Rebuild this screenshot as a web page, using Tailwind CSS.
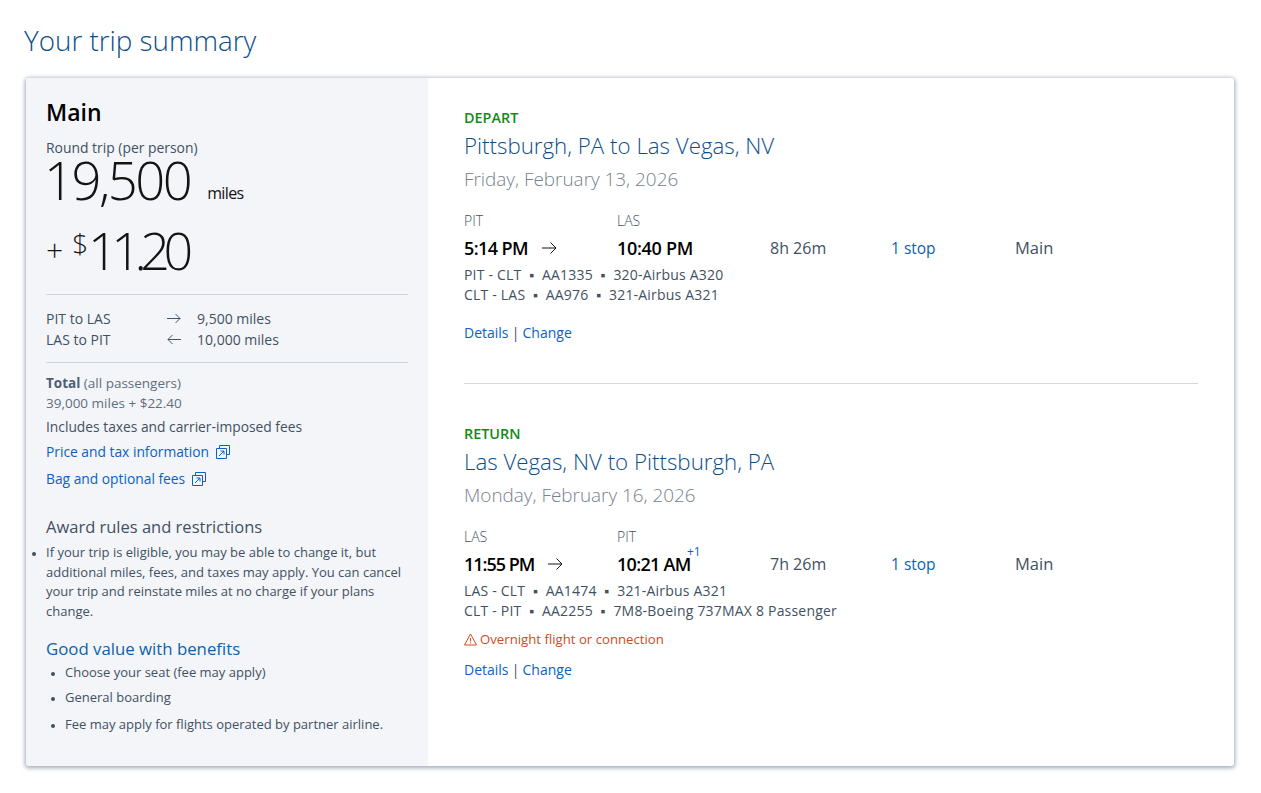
<!DOCTYPE html>
<html lang="en">
<head>
  <meta charset="UTF-8" />
  <title>Your trip summary</title>
  <script src="https://cdn.jsdelivr.net/npm/@tailwindcss/browser@4"></script>
</head>
<body class="bg-white font-['Open_Sans',sans-serif] text-[#3f5163]">
<div class="w-[1261px] h-[793px] overflow-hidden pl-[26px] pr-[27px]">
  <h1 class="h-[78px] pt-[20px] -ml-[2px] text-[27.8px] leading-[40px] font-light text-[#0b4f8a]">Your trip summary</h1>

  <div class="flex h-[688px] rounded-[3px] bg-white shadow-[0_1px_4px_1px_rgba(90,115,140,0.6)]">
    <!-- Fare panel -->
    <aside class="w-[402px] shrink-0 bg-[#f4f5f8] pl-[20px] pr-[20px] rounded-l-[3px]">
      <h2 class="pt-[18px] text-[23px] leading-[32px] font-semibold text-black">Main</h2>
      <p class="mt-[10px] text-[13.9px] leading-[20px]">Round trip (per person)</p>
      <div class="flex items-end h-[52px] -mt-[4px] -ml-[2px] text-[#131313]">
        <span class="text-[52.5px] leading-[52px] font-light tracking-[-2.5px]">19,500</span>
        <span class="ml-[17px] mb-[3px] text-[16px] leading-[20px] tracking-[-0.6px]">miles</span>
      </div>
      <div class="flex items-end h-[58px] mt-[14px] text-[#131313]">
        <span class="text-[30px] leading-[44px] font-light mb-[6px]">+</span>
        <span class="ml-[9px] mb-[19px] text-[28px] leading-[32px] font-light">$</span>
        <span class="text-[52px] leading-[56px] font-light tracking-[-6.5px]">11.20</span>
      </div>

      <div class="mt-[16px] border-t border-[#ccd6e0] pt-[13px] pb-[12px] text-[14px] leading-[21px]">
        <div class="flex"><span class="w-[120px]">PIT to LAS</span><svg class="w-[16px] h-[21px] mr-[15px]" viewBox="0 0 16 21" fill="none" stroke="#44566a" stroke-width="1"><path d="M1 10.5h13M9.500 6l4.500 4.500-4.500 4.500"/></svg><span>9,500 miles</span></div>
        <div class="flex"><span class="w-[120px]">LAS to PIT</span><svg class="w-[16px] h-[21px] mr-[15px]" viewBox="0 0 16 21" fill="none" stroke="#44566a" stroke-width="1"><path d="M15 10.5H2M6.500 6L2 10.5 6.500 15"/></svg><span>10,000 miles</span></div>
      </div>

      <div class="border-t border-[#ccd6e0] pt-[10px]">
        <p class="text-[13.5px] leading-[20px] text-[#5f6f80]"><b class="font-bold text-[#4d5f72]">Total</b> (all passengers)</p>
        <p class="text-[13.5px] leading-[20px] text-[#5f6f80]">39,000 miles + $22.40</p>
        <p class="mt-[4px] text-[13.8px] leading-[20px]">Includes taxes and carrier-imposed fees</p>
        <a class="mt-[5px] flex items-center gap-[7px] text-[13.8px] leading-[20px] text-[#0b62c4]">Price and tax information
          <svg class="w-[14px] h-[14px]" viewBox="0 0 14 14" fill="none" stroke="#0b62c4" stroke-width="1"><path d="M3.500 3.500v-3h10v9h-3M.5 3.500h10v10H.5zM3 11l5-5M4.500 6H8v3.500"/></svg></a>
        <a class="mt-[7px] flex items-center gap-[7px] text-[13.8px] leading-[20px] text-[#0b62c4]">Bag and optional fees
          <svg class="w-[14px] h-[14px]" viewBox="0 0 14 14" fill="none" stroke="#0b62c4" stroke-width="1"><path d="M3.500 3.500v-3h10v9h-3M.5 3.500h10v10H.5zM3 11l5-5M4.500 6H8v3.500"/></svg></a>
      </div>

      <h3 class="mt-[26px] text-[16.5px] leading-[24px]">Award rules and restrictions</h3>
      <ul class="mt-[4px] list-disc text-[13px] leading-[19.6px]">
        <li class="marker:text-[10px]">If your trip is eligible, you may be able to change it, but additional miles, fees, and taxes may apply. You can cancel your trip and reinstate miles at no charge if your plans change.</li>
      </ul>

      <h3 class="mt-[16px] text-[16.8px] leading-[24px] text-[#0b62ad]">Good value with benefits</h3>
      <ul class="mt-[1px] ml-[19px] list-disc text-[13px] leading-[20px]">
        <li class="marker:text-[10px]">Choose your seat (fee may apply)</li>
        <li class="mt-[5px] marker:text-[10px]">General boarding</li>
        <li class="mt-[7px] marker:text-[10px]">Fee may apply for flights operated by partner airline.</li>
      </ul>
    </aside>

    <!-- Slices -->
    <main class="flex-1 pl-[36px] pr-[36px]">
      <section class="h-[306px] pt-[30px] border-b border-[#d3d8dd]">
        <p class="text-[14.4px] leading-[20px] font-semibold text-[#128a17]">DEPART</p>
        <h2 class="mt-[2px] text-[22.3px] leading-[32px] font-light text-[#0b4f8a]">Pittsburgh, PA to Las Vegas, NV</h2>
        <p class="mt-[1px] text-[18.9px] leading-[32px] font-light text-[#75828f]">Friday, February 13, 2026</p>
        <div class="mt-[16px] grid grid-cols-[153px_153px_121px_124px_1fr]">
          <span class="text-[14px] leading-[20px] font-light">PIT</span>
          <span class="col-span-4 text-[14px] leading-[20px] font-light">LAS</span>
          <span class="mt-[5px] flex items-center text-[18px] leading-[24px] font-semibold text-black tracking-[-0.6px]">5:14 PM
            <svg class="ml-[13px] w-[17px] h-[14px]" viewBox="0 0 17 14" fill="none" stroke="#131313" stroke-width="1"><path d="M1 7h14M9.500 1.500L15 7l-5.500 5.500"/></svg></span>
          <span class="mt-[5px] text-[18px] leading-[24px] font-semibold text-black tracking-[-0.3px]">10:40 PM</span>
          <span class="mt-[5px] text-[16px] leading-[24px]">8h 26m</span>
          <span class="mt-[5px] text-[15.5px] leading-[24px] text-[#0b62ad]">1 stop</span>
          <span class="mt-[5px] text-[16.5px] leading-[24px]">Main</span>
        </div>
        <p class="mt-[5px] text-[14px] leading-[19.5px] tracking-[0.2px]">PIT - CLT &nbsp;▪&nbsp; AA1335 &nbsp;▪&nbsp; 320-Airbus A320</p>
        <p class="text-[14px] leading-[19.5px] tracking-[0.2px]">CLT - LAS &nbsp;▪&nbsp; AA976 &nbsp;▪&nbsp; 321-Airbus A321</p>
        <p class="mt-[19px] text-[14px] leading-[20px]"><a class="text-[#0b62c4]">Details</a><span class="inline-block w-[14px] text-center">|</span><a class="text-[#0b62c4]">Change</a></p>
      </section>

      <section class="pt-[40px]">
        <p class="text-[14.4px] leading-[20px] font-semibold text-[#128a17]">RETURN</p>
        <h2 class="mt-[2px] text-[22.3px] leading-[32px] font-light text-[#0b4f8a]">Las Vegas, NV to Pittsburgh, PA</h2>
        <p class="mt-[1px] text-[18.9px] leading-[32px] font-light text-[#75828f]">Monday, February 16, 2026</p>
        <div class="mt-[16px] grid grid-cols-[153px_153px_121px_124px_1fr]">
          <span class="text-[14px] leading-[20px] font-light">LAS</span>
          <span class="col-span-4 text-[14px] leading-[20px] font-light">PIT</span>
          <span class="mt-[5px] flex items-center text-[18px] leading-[24px] font-semibold text-black tracking-[-1px]">11:55 PM
            <svg class="ml-[13px] w-[17px] h-[14px]" viewBox="0 0 17 14" fill="none" stroke="#131313" stroke-width="1"><path d="M1 7h14M9.500 1.500L15 7l-5.500 5.500"/></svg></span>
          <span class="relative mt-[5px] text-[18px] leading-[24px] font-semibold text-black tracking-[-0.7px]">10:21 AM<span class="absolute left-[70px] -top-[8px] text-[12px] leading-[16px] font-normal text-[#0b62c4] tracking-normal">+1</span></span>
          <span class="mt-[5px] text-[16px] leading-[24px]">7h 26m</span>
          <span class="mt-[5px] text-[15.5px] leading-[24px] text-[#0b62ad]">1 stop</span>
          <span class="mt-[5px] text-[16.5px] leading-[24px]">Main</span>
        </div>
        <p class="mt-[5px] text-[14px] leading-[19.5px] tracking-[0.2px]">LAS - CLT &nbsp;▪&nbsp; AA1474 &nbsp;▪&nbsp; 321-Airbus A321</p>
        <p class="text-[14px] leading-[19.5px] tracking-[0.2px]">CLT - PIT &nbsp;▪&nbsp; AA2255 &nbsp;▪&nbsp; 7M8-Boeing 737MAX 8 Passenger</p>
        <p class="mt-[9px] flex items-center gap-[3px] text-[13.2px] leading-[20px] text-[#cf4a1e]">
          <svg class="w-[13px] h-[13px]" viewBox="0 0 13 13" fill="none" stroke="#cf4a1e" stroke-width="1"><path d="M6.500 1L12.500 12H.5zM6.500 5v3.500M6.500 9.500v1"/></svg>Overnight flight or connection</p>
        <p class="mt-[11px] text-[14px] leading-[20px]"><a class="text-[#0b62c4]">Details</a><span class="inline-block w-[14px] text-center">|</span><a class="text-[#0b62c4]">Change</a></p>
      </section>
    </main>
  </div>
</div>
</body>
</html>
